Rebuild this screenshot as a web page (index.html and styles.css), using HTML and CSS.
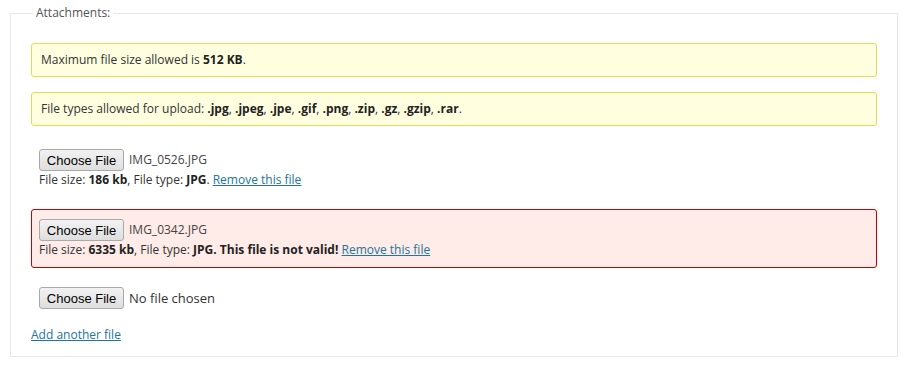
FILE: index.html
```html
<!DOCTYPE html>
<html lang="en">
<head>
    <meta charset="UTF-8">
    <title>Attachments</title>
    <link rel="stylesheet" href="styles.css">
</head>
<body>
    <fieldset class="attachments">
        <legend>Attachments:</legend>

        <div class="notice">Maximum file size allowed is <b>512 KB</b>.</div>
        <div class="notice notice-types">File types allowed for upload: <b>.jpg</b>, <b>.jpeg</b>, <b>.jpe</b>, <b>.gif</b>, <b>.png</b>, <b>.zip</b>, <b>.gz</b>, <b>.gzip</b>, <b>.rar</b>.</div>

        <div class="file-row">
            <div class="picker">
                <button class="choose" type="button">Choose File</button>
                <span class="file-name">IMG_0526.JPG</span>
            </div>
            <p class="file-info">File size: <b>186 kb</b>, File type: <b>JPG</b>. <a href="#">Remove this file</a></p>
        </div>

        <div class="file-row invalid">
            <div class="picker">
                <button class="choose" type="button">Choose File</button>
                <span class="file-name">IMG_0342.JPG</span>
            </div>
            <p class="file-info">File size: <b>6335 kb</b>, File type: <b>JPG. This file is not valid!</b> <a href="#">Remove this file</a></p>
        </div>

        <div class="file-row empty">
            <div class="picker">
                <button class="choose" type="button">Choose File</button>
                <span class="file-name no-file">No file chosen</span>
            </div>
        </div>

        <a href="#" class="add-file">Add another file</a>
    </fieldset>
</body>
</html>
```

FILE: styles.css
```css
* {
    box-sizing: border-box;
}

body {
    margin: 4px 10px 10px;
    background: #fff;
    font-family: "Open Sans", "Liberation Sans", sans-serif;
    font-size: 12px;
    line-height: 18px;
    color: #333;
}

.attachments {
    margin: 0;
    padding: 21px 20px 12px;
    border: 1px solid #e8e8e8;
    display: flex;
    flex-direction: column;
    align-items: stretch;
}

.attachments legend {
    margin-left: 2px;
    padding: 0 3px;
    color: #555;
    font-size: 12px;
    line-height: 18px;
}

.notice {
    background: #ffffe0;
    border: 1px solid #e6db55;
    border-radius: 3px;
    padding: 7px 9px;
    margin-bottom: 15px;
}

.notice-types {
    margin-bottom: 13px;
}

.notice b,
.file-info b {
    color: #222;
}

.file-row {
    border: 1px solid transparent;
    border-radius: 3px;
    padding: 9px 7px 8px;
    margin-bottom: 11px;
}

.file-row.invalid {
    background: #ffebe8;
    border-color: #cc0000;
    margin-bottom: 9px;
}

.file-row.empty {
    margin-bottom: 8px;
}

.picker {
    display: flex;
    align-items: center;
    height: 22px;
}

.choose {
    width: 85px;
    height: 22px;
    margin: 0;
    padding: 0;
    font-family: "Liberation Sans", Arial, sans-serif;
    font-size: 13px;
    color: #000;
    background: linear-gradient(#f2f2f2, #dedede);
    border: 1px solid #a9a9a9;
    border-radius: 3px;
}

.file-name {
    margin-left: 5px;
    font-size: 12px;
    color: #444;
}

.no-file {
    font-size: 13px;
    color: #333;
}

.file-info {
    margin: 0;
    line-height: 18px;
}

a {
    color: #21759b;
}

.add-file {
    align-self: flex-start;
    line-height: 18px;
}
```
